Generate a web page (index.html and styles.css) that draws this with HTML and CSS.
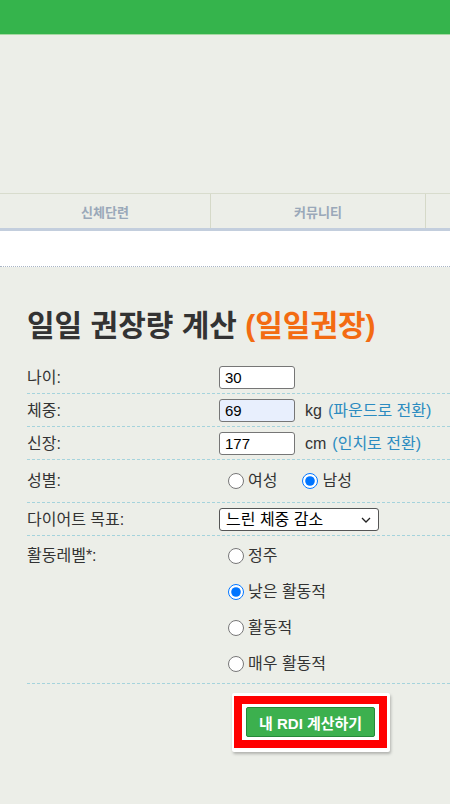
FILE: index.html
```html
<!DOCTYPE html>
<html lang="ko">
<head>
    <meta charset="UTF-8">
    <meta name="viewport" content="width=device-width, initial-scale=1.0">
    <title>일일 권장량 계산</title>
    <link rel="stylesheet" href="styles.css">
</head>
<body>

<div class="top-bar"></div>
<div class="banner"></div>

<div class="menu">
    <div class="menu-item">신체단련</div>
    <div class="menu-item">커뮤니티</div>
    <div class="menu-item"></div>
</div>
<div class="sub-menu"></div>

<div class="calc-container">
    <h1 class="calc-title">일일 권장량 계산 <span class="calc-title-sub">(일일권장)</span></h1>

    <form class="calc-form">
        <div class="calc-row">
            <label class="calc-label" for="edad">나이:</label>
            <div class="calc-field">
                <input type="text" id="edad" class="calc-input" value="30">
            </div>
        </div>
        <div class="calc-row">
            <label class="calc-label" for="peso">체중:</label>
            <div class="calc-field">
                <input type="text" id="peso" class="calc-input calc-input-filled" value="69">
                <span class="calc-unit">kg</span>
                <a href="#" class="calc-link">(파운드로 전환)</a>
            </div>
        </div>
        <div class="calc-row">
            <label class="calc-label" for="altura">신장:</label>
            <div class="calc-field">
                <input type="text" id="altura" class="calc-input" value="177">
                <span class="calc-unit">cm</span>
                <a href="#" class="calc-link">(인치로 전환)</a>
            </div>
        </div>
        <div class="calc-row calc-row-radio">
            <span class="calc-label">성별:</span>
            <div class="calc-field">
                <label class="calc-option"><input type="radio" name="sexo"> 여성</label>
                <label class="calc-option"><input type="radio" name="sexo" checked> 남성</label>
            </div>
        </div>
        <div class="calc-row">
            <label class="calc-label" for="objetivo">다이어트 목표:</label>
            <div class="calc-field">
                <div class="select-wrap">
                    <select id="objetivo" class="calc-select">
                        <option>느린 체중 감소</option>
                        <option>체중 유지</option>
                        <option>빠른 체중 감소</option>
                    </select>
                    <svg class="select-flecha" width="10" height="6" viewBox="0 0 10 6">
                        <path d="M1 1 L5 5 L9 1" fill="none" stroke="#222" stroke-width="1.3"/>
                    </svg>
                </div>
            </div>
        </div>
        <div class="calc-row calc-row-activity">
            <span class="calc-label">활동레벨*:</span>
            <div class="calc-field calc-field-list">
                <label class="calc-option"><input type="radio" name="actividad"> 정주</label>
                <label class="calc-option"><input type="radio" name="actividad" checked> 낮은 활동적</label>
                <label class="calc-option"><input type="radio" name="actividad"> 활동적</label>
                <label class="calc-option"><input type="radio" name="actividad"> 매우 활동적</label>
            </div>
        </div>

        <div class="calc-actions">
            <div class="boton-marco">
                <div class="boton-borde">
                    <button type="button" class="boton-calcular">내 RDI 계산하기</button>
                </div>
            </div>
        </div>
    </form>
</div>

</body>
</html>
```

FILE: styles.css
```css
body {
    font-family: "Liberation Sans", "Noto Sans CJK KR", sans-serif;
    margin: 0;
    padding: 0;
    background-color: #eceee8;
    color: #333;
    overflow-x: hidden;
}

.top-bar {
    height: 34px;
    background-color: #35b44c;
    border-bottom: 1px solid #a6d9a2;
}

.banner {
    height: 158px;
}

.menu {
    display: flex;
    height: 34px;
    overflow: hidden;
    border-top: 1px solid #d8dccd;
    border-bottom: 3px solid #c3cedd;
}

.menu-item {
    flex: 0 0 214px;
    display: flex;
    align-items: center;
    justify-content: center;
    border-right: 1px solid #d5d9c8;
    color: #9aa8b9;
    font-size: 13px;
    font-weight: bold;
}

.menu-item:first-child {
    flex-basis: 210px;
}

.sub-menu {
    height: 35px;
    background-color: white;
    border-bottom: 1px dotted #a9b5c6;
}

.calc-container {
    padding: 0 0 40px 27px;
}

.calc-title {
    margin: 41px 0 17px 0;
    font-size: 30px;
    line-height: 36px;
    font-weight: bold;
    color: #333;
}

.calc-title-sub {
    color: #f36b12;
}

.calc-form {
    display: flex;
    flex-direction: column;
}

.calc-row {
    display: flex;
    align-items: center;
    padding: 5px 0 4px 0;
    border-bottom: 1px dashed #a5d3dc;
    font-size: 16px;
    line-height: 22px;
}

.calc-label {
    flex: 0 0 192px;
    color: #333;
}

.calc-field {
    display: flex;
    align-items: center;
    gap: 6px;
}

.calc-input {
    width: 76px;
    height: 23px;
    box-sizing: border-box;
    padding: 1px 5px;
    font-family: "Liberation Sans", sans-serif;
    font-size: 15px;
    color: #000;
    border: 1px solid #767676;
    border-radius: 3px;
    background-color: white;
}

.calc-input-filled {
    background-color: #e8effd;
}

.calc-unit {
    margin-left: 4px;
    color: #333;
}

.calc-link {
    color: #2b8bc0;
    text-decoration: none;
}

.calc-row-radio {
    padding: 10px 0 10px 0;
}

.calc-row-radio .calc-option {
    margin-right: 10px;
}

.calc-option {
    display: flex;
    align-items: center;
    gap: 2px;
    color: #333;
    margin-left: 9px;
}

.calc-option input {
    width: 16px;
    height: 16px;
    margin: 0 2px 0 0;
}

.select-wrap {
    position: relative;
    display: flex;
}

.calc-select {
    appearance: none;
    width: 160px;
    height: 23px;
    font-family: "Liberation Sans", "Noto Sans CJK KR", sans-serif;
    font-size: 16px;
    color: #000;
    border: 1px solid #555;
    border-radius: 3px;
    background-color: white;
    padding: 0 4px 0 6px;
}

.select-flecha {
    position: absolute;
    right: 8px;
    top: 9px;
    pointer-events: none;
}

.calc-row-activity {
    align-items: flex-start;
    padding: 9px 0 8px 0;
}

.calc-field-list {
    flex-direction: column;
    align-items: flex-start;
    gap: 14px;
}

.calc-actions {
    display: flex;
    padding: 9px 0 0 205px;
}

.boton-marco {
    background-color: white;
    padding: 3px 3px 4px 2px;
    border-radius: 2px;
    box-shadow: 1px 2px 3px rgba(0, 0, 0, 0.25);
}

.boton-borde {
    border: 8px solid #ff0000;
    background-color: white;
    padding: 3px 4px;
}

.boton-calcular {
    display: block;
    height: 30px;
    padding: 0 12px;
    background-color: #3cb04e;
    color: white;
    border: 1px solid #25893a;
    border-radius: 2px;
    font-family: "Liberation Sans", "Noto Sans CJK KR", sans-serif;
    font-size: 15px;
    font-weight: bold;
    cursor: pointer;
}
```
